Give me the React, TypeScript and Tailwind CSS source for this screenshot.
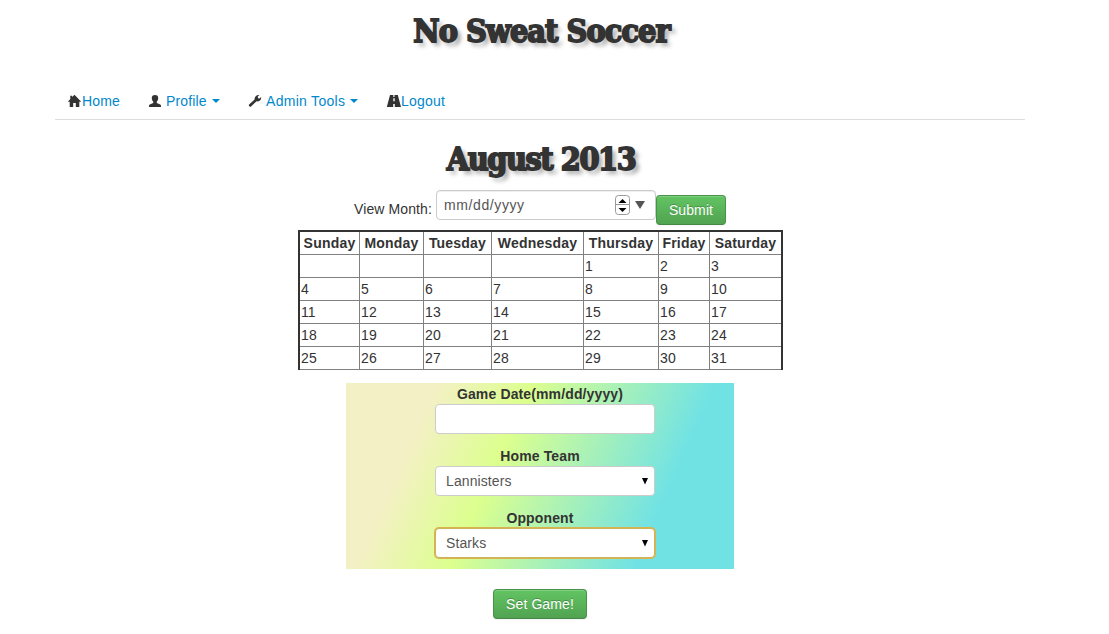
import type { ReactNode } from 'react'

const DAYS = ['Sunday', 'Monday', 'Tuesday', 'Wednesday', 'Thursday', 'Friday', 'Saturday']
const DATES: (number | null)[] = [null, null, null, null, ...Array.from({ length: 31 }, (_, i) => i + 1)]

const HomeIcon = () => (
  <svg width="14" height="14" viewBox="0 0 14 14" fill="#333"><path d="M6.5 .8 13.2 7.8H11.3V13H7.8V9H5.2V13H1.7V7.8H-.2L2.3 5V1.8H4.2V3.1Z" /></svg>
)
const UserIcon = () => (
  <svg width="14" height="14" viewBox="0 0 14 14" fill="#333"><path d="M7 1C9.2 1 10.2 2.2 10.2 4C10.2 5.8 9.5 6.8 8.8 7.6V9L12.2 10.4Q13 10.8 13 12V13H1V12Q1 10.8 1.8 10.4L5.2 9V7.6C4.5 6.8 3.8 5.8 3.8 4C3.8 2.2 4.8 1 7 1Z" /></svg>
)
const WrenchIcon = () => (
  <svg width="14" height="14" viewBox="0 0 14 14" fill="#333"><path d="M11.4 1 9.7 2.7 10.1 4.2 11.5 4.6 13.1 3.1C13.5 5.3 12.1 7.5 9.8 7.5L8.5 7.3 3 12.6C2 13.4.1 11.5 1.1 10.6L6.6 5.5C6.3 3 8.5.5 11.4 1Z" /></svg>
)
const RoadIcon = () => (
  <svg width="14" height="14" viewBox="0 0 14 14" fill="#333"><path fillRule="evenodd" d="M3 1H6.3V3H7.5V1H10.8L14 13H7.8V10H6.2V13H-.2ZM6.3 4.3V7.2H7.7V4.3Z" /></svg>
)
const Caret = () => <span className="ml-[5px] inline-block border-x-4 border-t-4 border-x-transparent border-t-[#0088cc]" />

function Heading({ children, className }: { children: ReactNode; className: string }) {
  return (
    <h1
      className={`whitespace-nowrap text-center font-['DejaVu_Serif'] font-bold leading-[40px] [font-stretch:condensed] [text-shadow:4px_4px_4px_#aaa] [-webkit-text-stroke:1.8px_#333] ${className}`}
    >
      {children}
    </h1>
  )
}

function Button({ children, className }: { children: ReactNode; className: string }) {
  return (
    <button
      className={`h-[30px] rounded-[4px] border border-[#499249] border-b-[#458845] bg-linear-to-b from-[#62c462] to-[#51a351] text-center leading-5 tracking-[0.1px] text-white shadow-[inset_0_1px_0_rgba(255,255,255,0.2),0_1px_2px_rgba(0,0,0,0.05)] [text-shadow:0_-1px_0_rgba(0,0,0,0.25)] ${className}`}
    >
      {children}
    </button>
  )
}

function Select({ value, focused = false }: { value: string; focused?: boolean }) {
  return (
    <div
      className={`ml-[10px] flex h-[30px] w-[220px] items-center justify-between rounded-[4px] border bg-white pl-[10px] pr-[6px] font-normal tracking-[0.1px] text-[#555] ${focused ? 'border-[#ccb35c] shadow-[0_0_0_1px_#d9b44e]' : 'border-[#ccc]'}`}
    >
      <span>{value}</span>
      <svg width="6" height="8" viewBox="0 0 6 8"><path d="M0 1H6L3 7.5Z" fill="#000" /></svg>
    </div>
  )
}

export default function App() {
  return (
    <main className="h-[634px] w-full overflow-hidden bg-white pl-[55px] font-['Liberation_Sans',sans-serif] text-[14px] leading-5 text-[#333]">
      <div className="flex w-[970px] flex-col items-center">
        <Heading className="mt-[11px] pl-[3px] text-[32px] tracking-[-0.9px]">No Sweat Soccer</Heading>
        <nav className="mt-[31px] flex h-[38px] w-full border-b border-[#ddd] pl-[13px] tracking-[0.13px] text-[#0088cc]">
          <a className="flex h-[38px] w-[80px] items-center"><HomeIcon />Home</a>
          <a className="flex h-[38px] w-[100px] items-center"><UserIcon /><span className="ml-1">Profile</span><Caret /></a>
          <a className="flex h-[38px] w-[139px] items-center"><WrenchIcon /><span className="ml-1 tracking-[0.3px]">Admin Tools</span><Caret /></a>
          <a className="flex h-[38px] items-center tracking-[0.2px]"><RoadIcon />Logout</a>
        </nav>
        <Heading className="mt-[19px] pl-[2px] text-[32px] tracking-[-1.4px]">August 2013</Heading>
        <div className="mt-[11px] flex h-[40px] w-[372px] items-start">
          <label className="mt-[9px] w-[82px] whitespace-nowrap tracking-[0.1px]">View Month:</label>
          <div className="flex h-[30px] w-[220px] items-center rounded-[4px] border border-[#ccc] bg-white pl-[7px] text-[#555] shadow-[inset_0_1px_1px_rgba(0,0,0,0.075)]">
            <span className="w-[171px] tracking-[0.6px]">mm/dd/yyyy</span>
            <svg width="15" height="20" viewBox="0 0 15 20">
              <rect x=".5" y=".5" width="14" height="19" rx="3" fill="#fff" stroke="#999" />
              <path d="M1 9.5H14" stroke="#999" />
              <path d="M3.5 8H11.5L7.5 4ZM3.5 13H11.5L7.5 17Z" fill="#000" />
            </svg>
            <svg className="ml-[5px]" width="10" height="8" viewBox="0 0 10 8"><path d="M0 0H10L5 8Z" fill="#555" /></svg>
          </div>
          <Button className="mt-[5px] w-[70px]">Submit</Button>
        </div>
        <div className="grid w-[485px] grid-cols-[60px_64px_68px_92px_75px_51px_71px] border-x-2 border-t-2 border-[#333]">
          {DAYS.map((day, i) => (
            <div key={day} className={`h-[23px] border-b border-[#808080] pl-px pt-px text-center font-bold tracking-[0.2px] ${i < 6 ? 'border-r' : ''}`}>{day}</div>
          ))}
          {DATES.map((date, i) => (
            <div key={i} className={`h-[23px] border-b border-[#808080] pl-[1.5px] pt-px tracking-[0.1px] ${i % 7 < 6 ? 'border-r' : ''}`}>{date}</div>
          ))}
        </div>
        <form className="mt-[13px] flex h-[186px] w-[388px] flex-col items-center bg-[linear-gradient(114deg,#f4f0c6_19%,#dcff8e_39.5%,#71e2e4_78.5%)] pt-px font-bold tracking-[0.13px]">
          <label>Game Date(mm/dd/yyyy)</label>
          <input className="ml-[10px] h-[30px] w-[220px] rounded-[4px] border border-[#ccc] bg-white" />
          <label className="mt-3">Home Team</label>
          <Select value="Lannisters" />
          <label className="mt-3">Opponent</label>
          <Select value="Starks" focused />
        </form>
        <Button className="mt-[20px] w-[94px]">Set Game!</Button>
      </div>
    </main>
  )
}
